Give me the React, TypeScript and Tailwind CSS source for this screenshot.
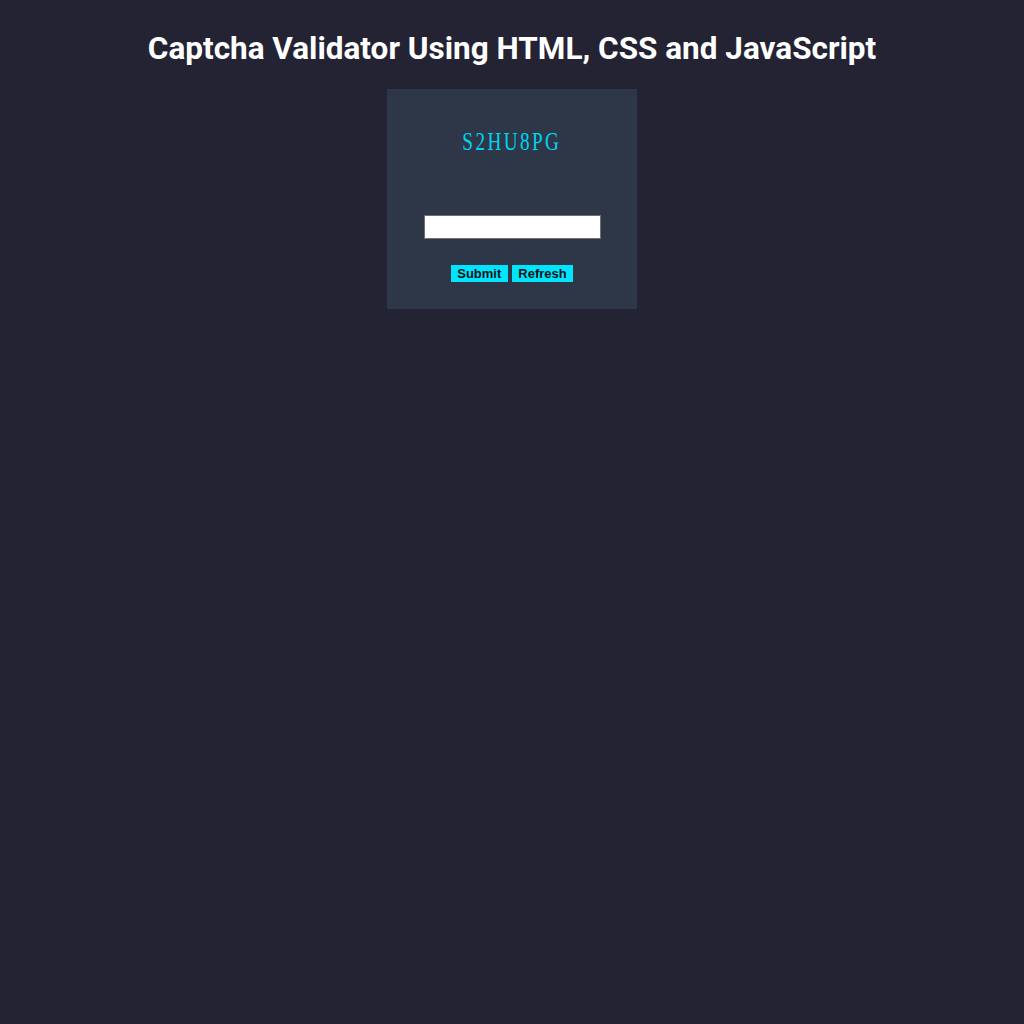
export default function App() {
  return (
    <div className="min-h-screen w-full bg-[#242333] flex flex-col items-center">
      {/* Heading */}
      <h1 className="mt-[30px] text-[31.5px] leading-[37px] font-bold text-white font-['Roboto',sans-serif]">
        Captcha Validator Using HTML, CSS and JavaScript
      </h1>

      {/* Captcha card */}
      <div className="mt-[22px] w-[250px] h-[220px] bg-[#2d3748] flex flex-col items-center pt-[39px]">
        <div className="text-[24px] leading-[28px] text-[#00d4f0] tracking-[3px] scale-x-[0.8] scale-y-[1.05] font-['Liberation_Serif',serif] select-none">
          S2HU8PG
        </div>

        <input
          type="text"
          className="mt-[59px] w-[177px] h-[24px] bg-white border border-[#6f6f6f] outline-none"
        />

        <div className="mt-[26px] flex items-center gap-[4px]">
          <button className="h-[17px] px-[6.5px] bg-[#00e5ff] text-[13px] leading-[17px] font-bold text-[#111] font-['Liberation_Sans',Arial,sans-serif]">
            Submit
          </button>
          <button className="h-[17px] px-[6.5px] bg-[#00e5ff] text-[13px] leading-[17px] font-bold text-[#111] font-['Liberation_Sans',Arial,sans-serif]">
            Refresh
          </button>
        </div>
      </div>
    </div>
  );
}
